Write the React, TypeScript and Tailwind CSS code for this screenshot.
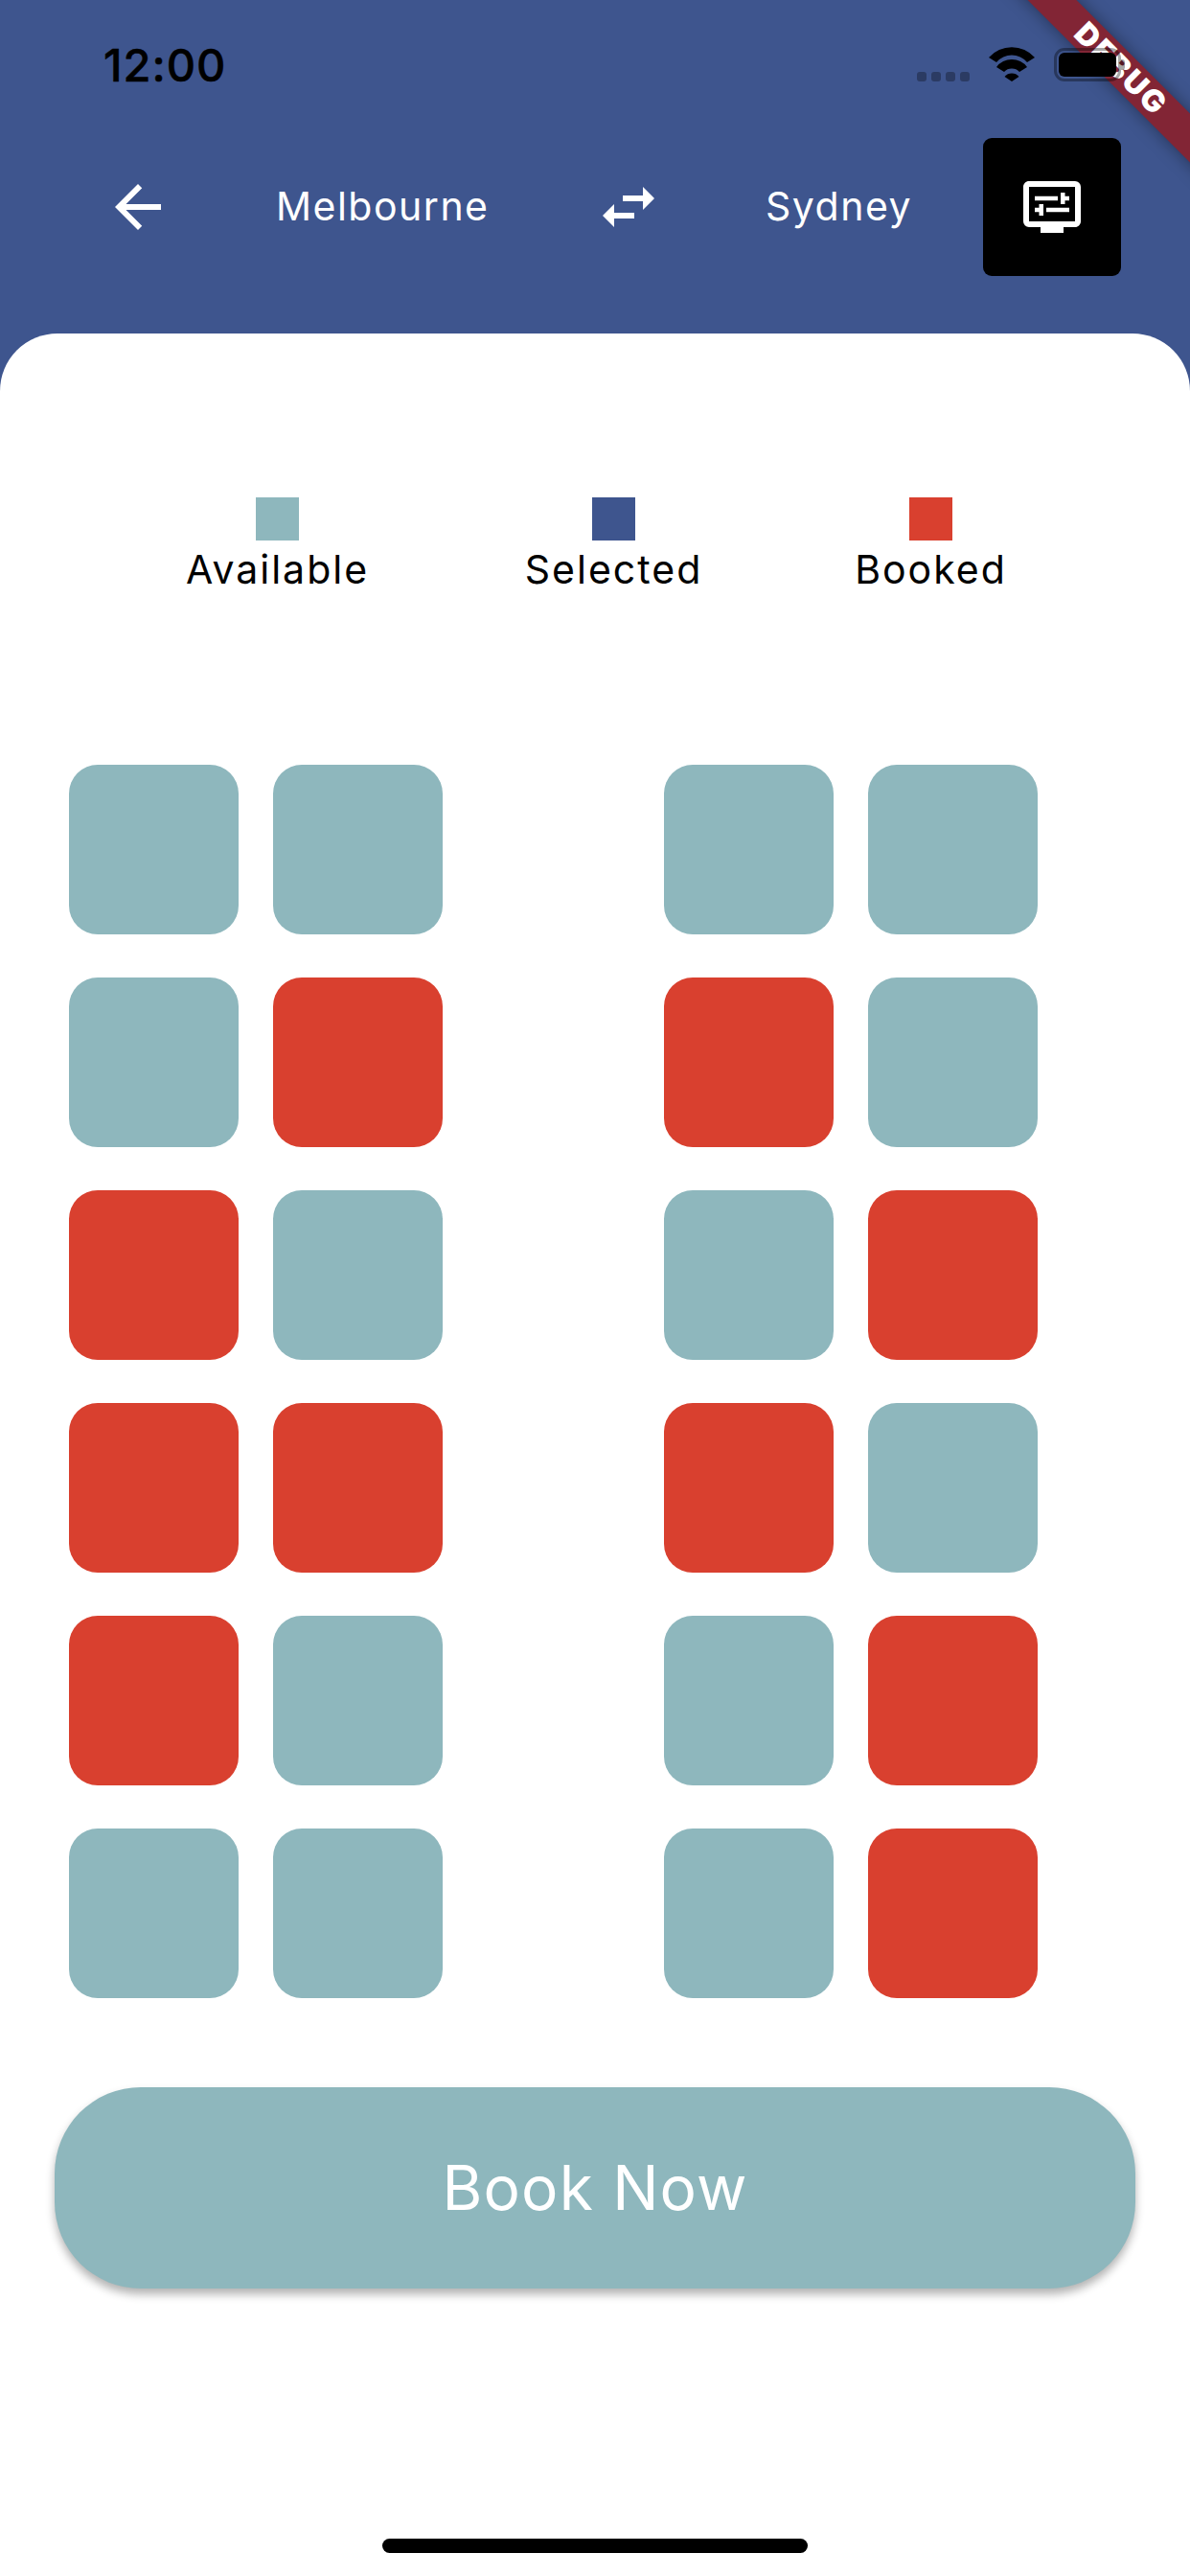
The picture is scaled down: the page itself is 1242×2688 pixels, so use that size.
import { MdArrowBack, MdOutlineDisplaySettings, MdSwapHoriz } from "react-icons/md";

const LEFT = [
  ["a", "a"],
  ["a", "b"],
  ["b", "a"],
  ["b", "b"],
  ["b", "a"],
  ["a", "a"],
];

const RIGHT = [
  ["a", "a"],
  ["b", "a"],
  ["a", "b"],
  ["b", "a"],
  ["a", "b"],
  ["a", "b"],
];

const LEGEND = [
  { label: "Available", color: "bg-[#8eb7bd]", width: "w-[193px]" },
  { label: "Selected", color: "bg-[#3e558e]", width: "w-[181px]" },
  { label: "Booked", color: "bg-[#d9402f]", width: "w-[153px]" },
];

function Seat({ state }: { state: string }) {
  return (
    <div
      className={`h-[177px] w-[177px] rounded-[30px] ${
        state === "b" ? "bg-[#d9402f]" : "bg-[#8eb7bd]"
      }`}
    />
  );
}

function SeatBlock({ rows }: { rows: string[][] }) {
  return (
    <div className="flex flex-col gap-[45px]">
      {rows.map((row, i) => (
        <div key={i} className="flex gap-[36px]">
          {row.map((state, j) => (
            <Seat key={j} state={state} />
          ))}
        </div>
      ))}
    </div>
  );
}

function StatusBar() {
  return (
    <div className="relative z-10 flex h-[144px] items-start pl-[108px] pr-[68px] pt-[40px]">
      <span className="text-[47px] font-medium leading-[56px] tracking-[1px] text-black [-webkit-text-stroke:0.5px_#000]">
        12:00
      </span>
      <div className="ml-auto mt-[35px] flex gap-[5px]">
        {[0, 1, 2, 3].map((d) => (
          <div key={d} className="h-[10px] w-[10px] rounded-[3px] bg-black/30" />
        ))}
      </div>
      <svg viewBox="0 0 48 36" className="ml-[20px] mt-[9px] h-[36px] w-[48px]">
        <path d="M0 11 A32 32 0 0 1 48 11 L40 16 A21 21 0 0 0 8 16 Z" fill="#000" />
        <path d="M8 21 A20 20 0 0 1 40 21 L32 26 A11 11 0 0 0 16 26 Z" fill="#000" />
        <path d="M16.500 31 A10 10 0 0 1 31.500 31 L24 36 Z" fill="#000" />
      </svg>
      <div className="ml-[20px] mt-[10px] flex h-[35px] w-[70px] items-center justify-center rounded-[11px] border-[3px] border-black/35">
        <div className="h-[25px] w-[60px] rounded-[6px] bg-black" />
      </div>
      <div className="mt-[22px] h-[11px] w-[4px] rounded-r-[3px] bg-black/35" />
    </div>
  );
}

function NavRow() {
  return (
    <div className="flex h-[144px] items-center text-white">
      <MdArrowBack size={72} className="ml-[108px] shrink-0" />
      <span className="ml-[108px] w-[222px] whitespace-nowrap text-center text-[41px] tracking-[1.5px]">
        Melbourne
      </span>
      <MdSwapHoriz size={72} className="ml-[110px] shrink-0" />
      <span className="ml-[107px] w-[151px] whitespace-nowrap text-center text-[41px] tracking-[1.5px]">
        Sydney
      </span>
      <div className="ml-[76px] flex h-[144px] w-[144px] items-center justify-center rounded-[9px] bg-black">
        <MdOutlineDisplaySettings size={72} />
      </div>
    </div>
  );
}

export default function App() {
  return (
    <div
      className="relative flex h-[2688px] w-[1242px] flex-col overflow-hidden bg-[#3e558e]"
      style={{ fontFamily: "Inter, 'Noto Sans', sans-serif" }}
    >
      <StatusBar />
      <NavRow />
      <div className="h-[60px] shrink-0" />

      <div className="flex flex-1 flex-col rounded-t-[60px] bg-white">
        {/* Legend */}
        <div className="ml-[193px] mt-[171px] flex gap-[164px]">
          {LEGEND.map((item) => (
            <div key={item.label} className={`flex flex-col items-center ${item.width}`}>
              <div className={`h-[45px] w-[45px] ${item.color}`} />
              <span className="whitespace-nowrap text-[41px] leading-[60px] tracking-[2px] text-black">
                {item.label}
              </span>
            </div>
          ))}
        </div>

        {/* Seats */}
        <div className="ml-[72px] mt-[174px] flex gap-[231px]">
          <SeatBlock rows={LEFT} />
          <SeatBlock rows={RIGHT} />
        </div>

        <button className="mx-[57px] mt-[93px] flex h-[210px] items-center justify-center rounded-[90px] bg-[#8eb7bd] text-[64px] tracking-[1.2px] text-white shadow-[0_6px_10px_rgba(0,0,0,0.3)]">
          Book Now
        </button>

        {/* Home indicator */}
        <div className="mx-auto mt-[261px] h-[15px] w-[444px] rounded-full bg-black" />
      </div>

      {/* Debug ribbon */}
      <div className="absolute left-[1000px] top-[54px] flex h-[36px] w-[340px] rotate-45 items-center justify-center bg-[#822535] text-[32px] font-black leading-none tracking-[2px] text-white shadow-[0_0_18px_rgba(0,0,0,0.4)]">
        DEBUG
      </div>
    </div>
  );
}
